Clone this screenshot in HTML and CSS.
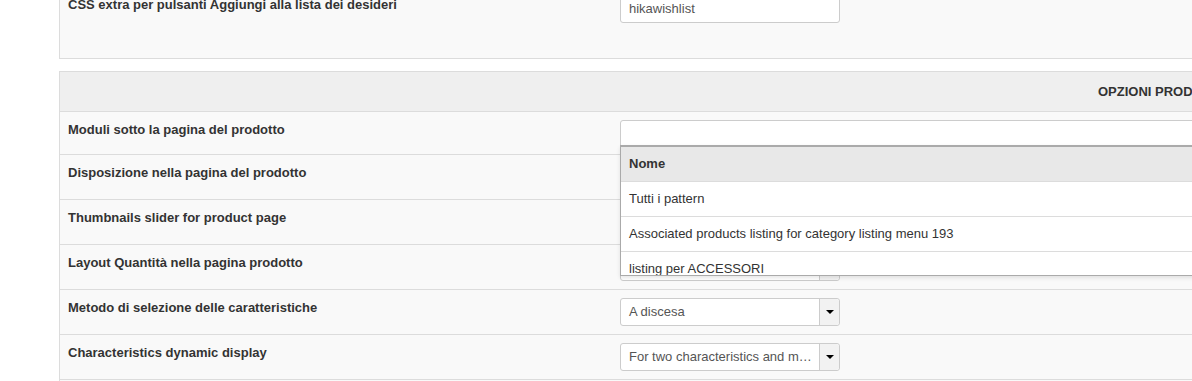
FILE: index.html
```html
<!DOCTYPE html>
<html lang="it">
<head>
    <meta charset="UTF-8">
    <title>Opzioni prodotto</title>
    <link rel="stylesheet" href="styles.css">
</head>
<body>
    <div class="page">
        <div class="panel panel-top">
            <div class="row row-last">
                <div class="label">CSS extra per pulsanti Aggiungi alla lista dei desideri</div>
                <div class="value">
                    <div class="text-input short">hikawishlist</div>
                </div>
            </div>
        </div>

        <div class="panel">
            <div class="panel-head">OPZIONI PRODOTTO</div>

            <div class="row row-first">
                <div class="label">Moduli sotto la pagina del prodotto</div>
                <div class="value picker">
                    <div class="text-input wide"></div>
                    <!-- open module list -->
                    <div class="dropdown">
                        <div class="dropdown-head">Nome</div>
                        <div class="dropdown-item">Tutti i pattern</div>
                        <div class="dropdown-item">Associated products listing for category listing menu 193</div>
                        <div class="dropdown-item">listing per ACCESSORI</div>
                    </div>
                </div>
            </div>
            <div class="row">
                <div class="label">Disposizione nella pagina del prodotto</div>
                <div class="value">
                    <div class="select"><span class="select-text">Predefinito</span><span class="select-btn"><i class="caret"></i></span></div>
                </div>
            </div>
            <div class="row">
                <div class="label">Thumbnails slider for product page</div>
                <div class="value">
                    <div class="select"><span class="select-text">No</span><span class="select-btn"><i class="caret"></i></span></div>
                </div>
            </div>
            <div class="row">
                <div class="label">Layout Quantità nella pagina prodotto</div>
                <div class="value">
                    <div class="select"><span class="select-text">Predefinito</span><span class="select-btn"><i class="caret"></i></span></div>
                </div>
            </div>
            <div class="row">
                <div class="label">Metodo di selezione delle caratteristiche</div>
                <div class="value">
                    <div class="select"><span class="select-text">A discesa</span><span class="select-btn"><i class="caret"></i></span></div>
                </div>
            </div>
            <div class="row">
                <div class="label">Characteristics dynamic display</div>
                <div class="value">
                    <div class="select"><span class="select-text">For two characteristics and more</span><span class="select-btn"><i class="caret"></i></span></div>
                </div>
            </div>
            <div class="row">
                <div class="label">Caratteristiche</div>
                <div class="value"></div>
            </div>
        </div>
    </div>
</body>
</html>
```

FILE: styles.css
```css
html, body {
    margin: 0;
    padding: 0;
    overflow: hidden;
}
body {
    font-family: "Liberation Sans", Arial, sans-serif;
    font-size: 13px;
    color: #333;
    background-color: #fff;
    width: 1192px;
    height: 381px;
}
.page {
    padding-left: 59px;
    width: 1700px;
}
.panel {
    background-color: #f9f9f9;
    border: 1px solid #dcdcdc;
    margin-bottom: 12px;
}
.panel-top {
    margin-top: -14px;
    padding-bottom: 27px;
}
.panel-head {
    background-color: #efefef;
    border-bottom: 1px solid #dcdcdc;
    height: 39px;
    line-height: 39px;
    font-weight: bold;
    padding-left: 1038px;
}
.row {
    display: grid;
    grid-template-columns: 560px 1fr;
    height: 44px;
    border-bottom: 1px solid #dcdcdc;
}
.row-first {
    height: 42px;
}
.row-last {
    border-bottom: none;
}
.label {
    font-weight: bold;
    padding: 10px 8px 0;
    line-height: 15px;
}
.value {
    padding-top: 8px;
}
.picker {
    position: relative;
}
.text-input {
    box-sizing: border-box;
    height: 28px;
    line-height: 26px;
    padding: 0 8px;
    background-color: #fff;
    border: 1px solid #ccc;
    border-radius: 3px;
    color: #555;
}
.short {
    width: 220px;
}
.wide {
    width: 900px;
}
.select {
    box-sizing: border-box;
    display: flex;
    width: 220px;
    height: 28px;
    background-color: #fff;
    border: 1px solid #ccc;
    border-radius: 3px;
    color: #555;
    line-height: 26px;
}
.select-text {
    flex: 1;
    min-width: 0;
    padding: 0 4px 0 8px;
    white-space: nowrap;
    overflow: hidden;
    text-overflow: ellipsis;
}
.select-btn {
    flex: none;
    width: 19px;
    border-left: 1px solid #ccc;
    background-color: #f2f2f2;
    border-radius: 0 3px 3px 0;
    display: flex;
    align-items: center;
    justify-content: center;
}
.caret {
    width: 0;
    height: 0;
    border-top: 4px solid #000;
    border-left: 4px solid transparent;
    border-right: 4px solid transparent;
}
.dropdown {
    position: absolute;
    top: 33px;
    left: 0;
    width: 900px;
    height: 128px;
    overflow: hidden;
    background-color: #fff;
    border: 1px solid #aaa;
    border-top: 2px solid #aaa;
    box-shadow: 0 2px 4px rgba(0,0,0,0.1);
    z-index: 5;
}
.dropdown-head {
    background-color: #e8e8e8;
    border-bottom: 1px solid #dcdcdc;
    height: 34px;
    line-height: 34px;
    padding-left: 8px;
    font-weight: bold;
}
.dropdown-item {
    height: 34px;
    line-height: 34px;
    padding-left: 8px;
    border-bottom: 1px solid #dcdcdc;
}
```
